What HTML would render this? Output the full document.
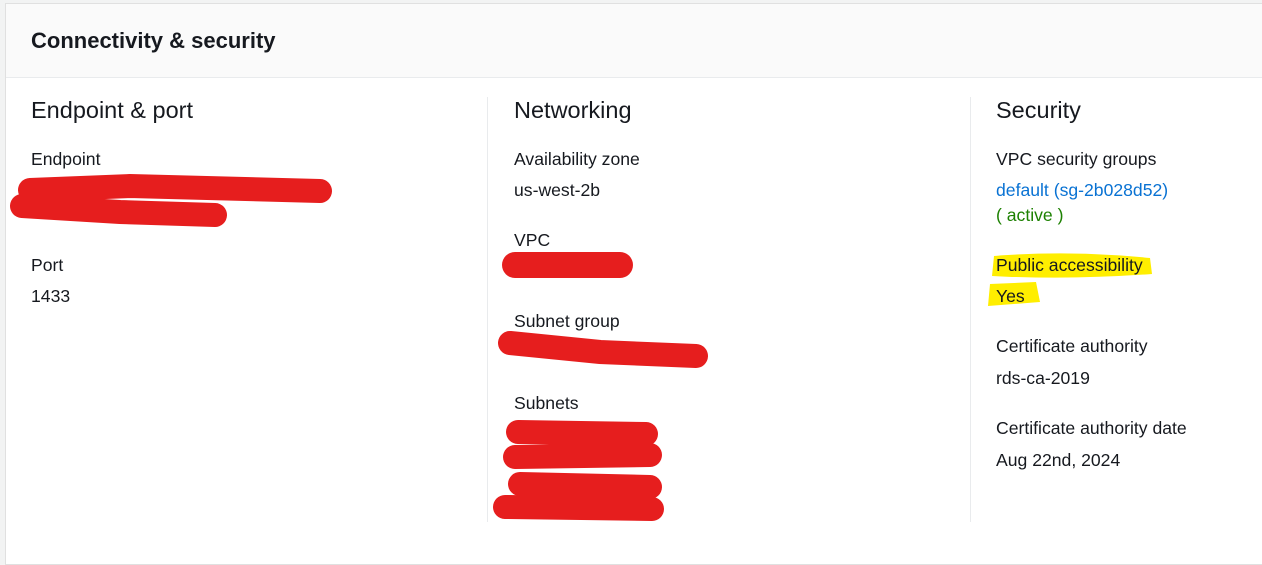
<!DOCTYPE html>
<html><head><style>
body{margin:0;width:1262px;height:542px;background:#f2f3f3;font-family:"Liberation Sans",Arial,sans-serif;color:#16191f;overflow:hidden;position:relative}
.card{position:absolute;left:5px;top:3px;width:1270px;height:560px;background:#fff;border:1px solid #e0e0e0}
.hdr{position:absolute;left:0;top:0;right:0;height:73px;background:#fafafa;border-bottom:1px solid #e9ebed}
.t{position:absolute;white-space:nowrap}
.h1{font-size:22px;font-weight:bold;left:31px;top:28px}
.h2{font-size:23.5px}
.l{font-size:17.6px}
.div{position:absolute;top:97px;height:425px;width:1px;background:#e9ebed}
svg{position:absolute;left:0;top:0}
</style></head><body>
<div class="card"><div class="hdr"></div></div>
<div class="t h1">Connectivity &amp; security</div>
<div class="div" style="left:487px"></div>
<div class="div" style="left:970px"></div>
<div class="t h2" style="left:31px;top:97px">Endpoint &amp; port</div>
<div class="t l" style="left:31px;top:149px">Endpoint</div>
<div class="t l" style="left:31px;top:255px">Port</div>
<div class="t l" style="left:31px;top:286px">1433</div>
<div class="t h2" style="left:514px;top:97px">Networking</div>
<div class="t l" style="left:514px;top:149px">Availability zone</div>
<div class="t l" style="left:514px;top:180px">us-west-2b</div>
<div class="t l" style="left:514px;top:230px">VPC</div>
<div class="t l" style="left:514px;top:311px">Subnet group</div>
<div class="t l" style="left:514px;top:393px">Subnets</div>
<svg width="1262" height="542">
<path d="M994 256 Q1070 250 1150 258 L1152 274 Q1070 280 992 276 Z" fill="#ffee00"/>
<path d="M990 284 L1036 282 L1040 302 L988 306 Z" fill="#ffee00"/>
<g stroke="#e61e1e" stroke-linecap="round" fill="none">
<path d="M30 190 L130 186 L320 191" stroke-width="24"/>
<path d="M22 206 L120 212 L215 215" stroke-width="24"/>
<path d="M515 265 L620 265" stroke-width="26"/>
<path d="M510 343 L600 352 L696 356" stroke-width="24"/>
<path d="M518 432 L646 434" stroke-width="24"/>
<path d="M515 457 L650 455" stroke-width="24"/>
<path d="M520 484 L650 487" stroke-width="24"/>
<path d="M505 507 L652 509" stroke-width="24"/>
</g>
</svg>
<div class="t h2" style="left:996px;top:97px">Security</div>
<div class="t l" style="left:996px;top:149px">VPC security groups</div>
<div class="t l" style="left:996px;top:180px;color:#0972d3">default (sg-2b028d52)</div>
<div class="t l" style="left:996px;top:205px;color:#1d8102">( active )</div>
<div class="t l" style="left:996px;top:255px">Public accessibility</div>
<div class="t l" style="left:996px;top:286px">Yes</div>
<div class="t l" style="left:996px;top:336px">Certificate authority</div>
<div class="t l" style="left:996px;top:368px">rds-ca-2019</div>
<div class="t l" style="left:996px;top:418px">Certificate authority date</div>
<div class="t l" style="left:996px;top:450px">Aug 22nd, 2024</div>
</body></html>
